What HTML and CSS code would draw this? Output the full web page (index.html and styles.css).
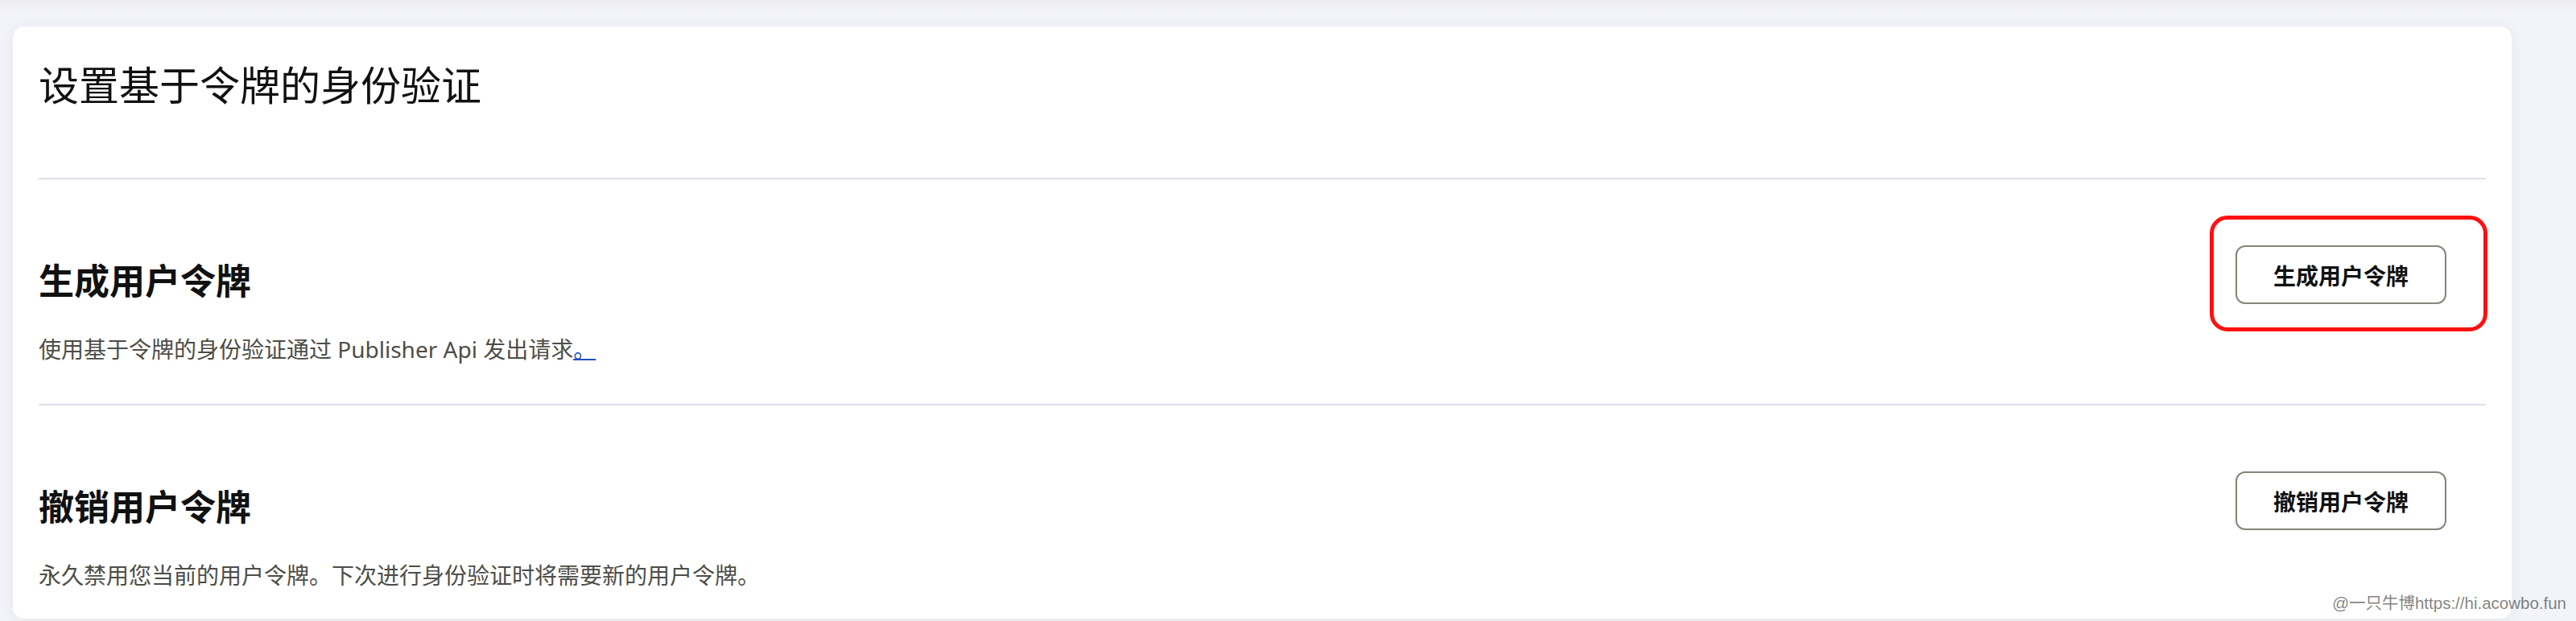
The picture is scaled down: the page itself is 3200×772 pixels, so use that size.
FILE: index.html
```html
<!DOCTYPE html>
<html lang="zh-CN">
<head>
<meta charset="utf-8">
<title>设置基于令牌的身份验证</title>
<link rel="stylesheet" href="styles.css">
</head>
<body>
<div class="topshade"></div>
<main class="card">
  <header class="card-head">
    <h1 class="title">设置基于令牌的身份验证</h1>
  </header>
  <section class="row">
    <div class="row-text">
      <h2 class="row-title">生成用户令牌</h2>
      <p class="row-desc">使用基于令牌的身份验证通过 Publisher Api 发出请求<a class="link" href="#">。</a></p>
    </div>
    <div class="row-action">
      <button class="btn" type="button">生成用户令牌</button>
      <span class="highlight"></span>
    </div>
  </section>
  <section class="row last">
    <div class="row-text">
      <h2 class="row-title">撤销用户令牌</h2>
      <p class="row-desc">永久禁用您当前的用户令牌。下次进行身份验证时将需要新的用户令牌。</p>
    </div>
    <div class="row-action">
      <button class="btn" type="button">撤销用户令牌</button>
    </div>
  </section>
</main>
<div class="watermark">@一只牛博https://hi.acowbo.fun</div>
</body>
</html>
```

FILE: styles.css
```css
html, body {
  margin: 0;
  padding: 0;
}
body {
  background: #f3f4f9;
  font-family: "Noto Sans", "Noto Sans CJK SC", sans-serif;
  color: #111;
  height: 772px;
  overflow: hidden;
  position: relative;
}
.topshade {
  height: 16px;
  background: linear-gradient(#ebebf0, #f3f4f9);
  margin-bottom: 17px;
}
.card {
  margin: 0 80px 0 16px;
  background: #fff;
  border-radius: 14px;
  box-shadow: 0 2px 18px rgba(40, 40, 90, 0.07);
  padding: 0 32px 34px;
}
.card-head {
  padding: 35px 0 83px;
  border-bottom: 2px solid #dfe0ec;
}
.title {
  margin: 0;
  font-family: "Noto Sans CJK SC", sans-serif;
  font-size: 50px;
  line-height: 70px;
  font-weight: 400;
  color: #111;
}
.row {
  display: flex;
  align-items: flex-start;
  padding: 82px 0 48px;
  border-bottom: 2px solid #dfe0ec;
}
.row.last {
  border-bottom: none;
  padding-bottom: 0;
}
.row-text {
  flex: 1;
  padding-top: 12px;
}
.row-title {
  margin: 0;
  font-family: "Noto Sans CJK SC", sans-serif;
  font-size: 44px;
  line-height: 60px;
  font-weight: 700;
  color: #111;
}
.row-desc {
  margin: 37px 0 0;
  font-size: 28px;
  line-height: 40px;
  color: #4d4d48;
}
.link {
  color: #1d4fc4;
  text-decoration: underline;
  text-decoration-thickness: 2px;
}
.row-action {
  position: relative;
  padding-right: 49px;
}
.btn {
  display: block;
  width: 262px;
  height: 73px;
  border: 2px solid #85857b;
  border-radius: 12px;
  background: #fff;
  font-family: "Noto Sans CJK SC", sans-serif;
  font-size: 28px;
  font-weight: 700;
  color: #111;
  padding: 0;
}
.highlight {
  position: absolute;
  left: -32px;
  top: -37px;
  width: 345px;
  height: 144px;
  box-sizing: border-box;
  border: 5px solid #ff1111;
  border-radius: 22px;
}
.watermark {
  position: absolute;
  right: 12px;
  bottom: 10px;
  font-family: "Liberation Sans", "Noto Sans CJK SC", sans-serif;
  font-size: 20.5px;
  line-height: 24px;
  color: rgba(0, 0, 0, 0.5);
}
```
